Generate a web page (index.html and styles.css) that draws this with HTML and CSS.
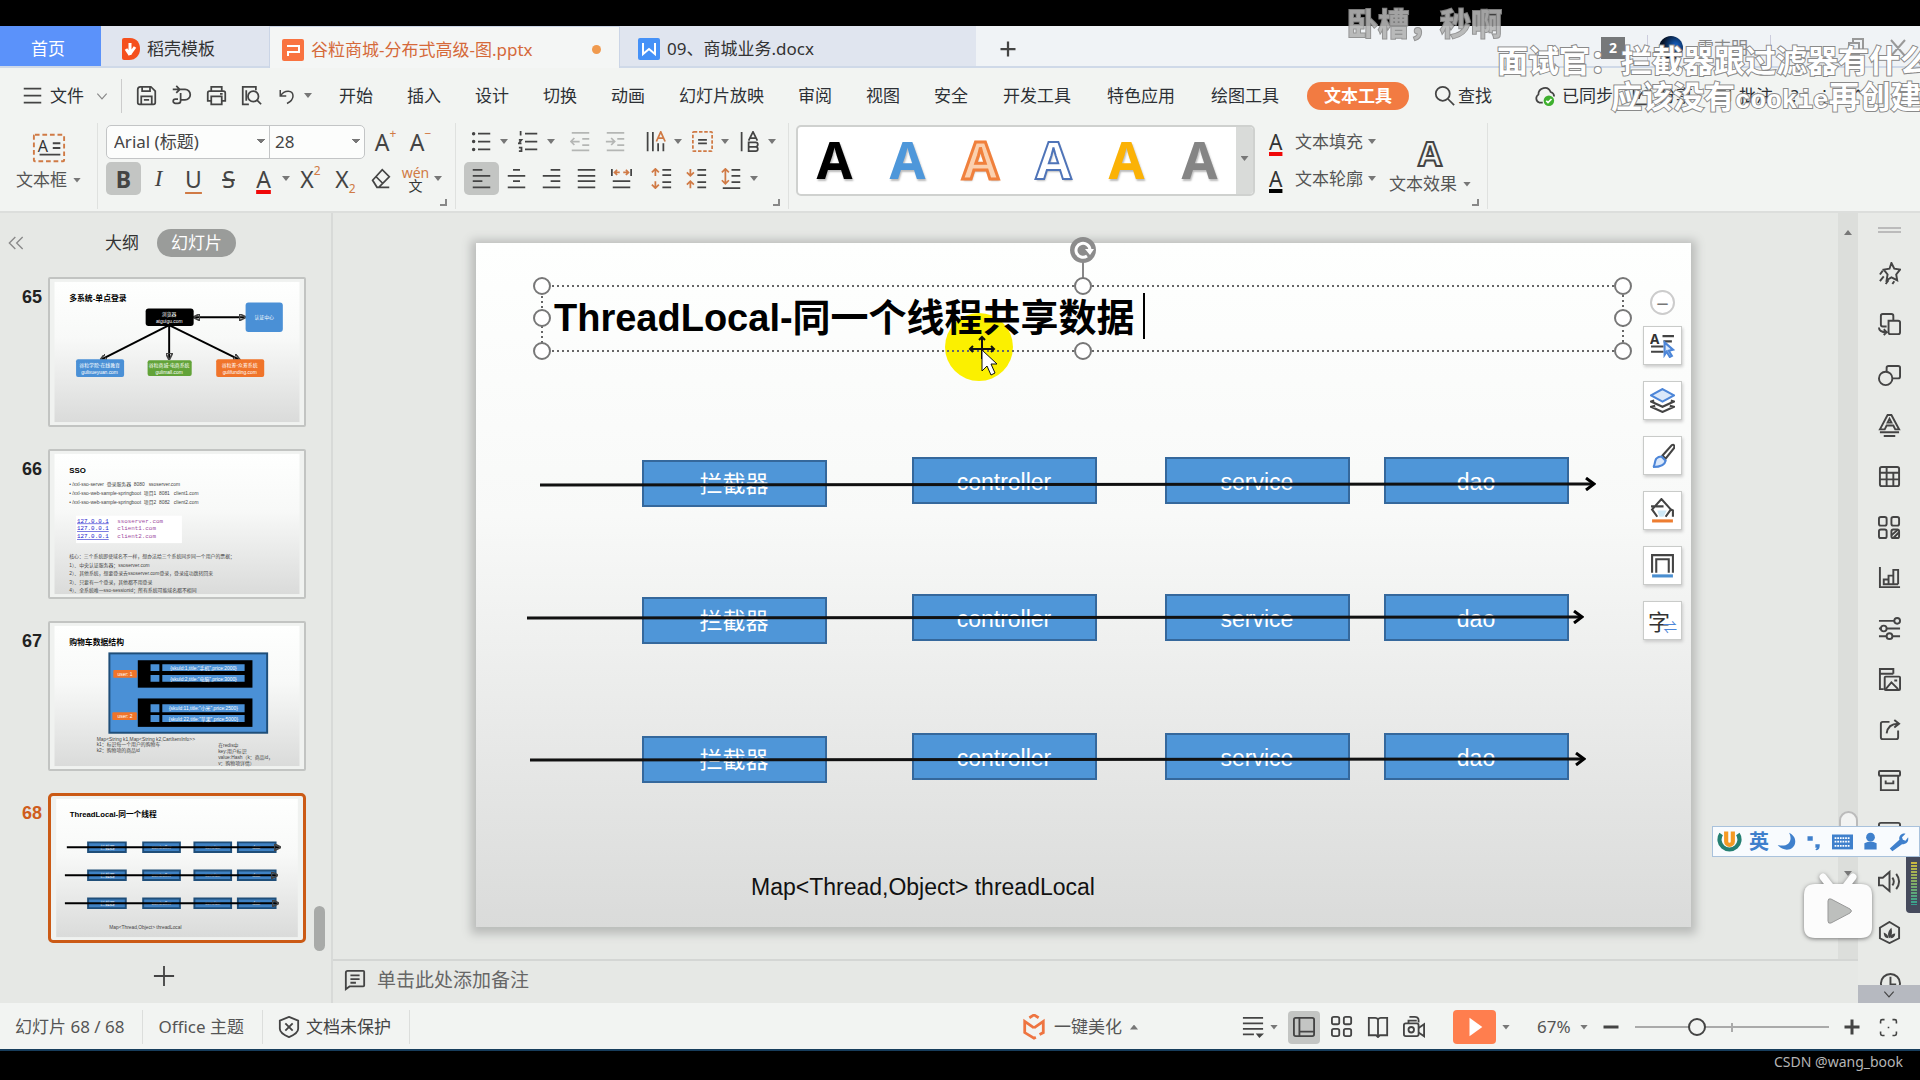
FILE: index.html
```html
<!DOCTYPE html>
<html lang="zh-CN">
<head>
<meta charset="utf-8">
<title>谷粒商城-分布式高级-图.pptx</title>
<link rel="stylesheet" href="styles.css">
</head>
<body>
<svg class="defs" aria-hidden="true">
  <symbol id="menu" viewBox="0 0 24 24"><path d="M2 4h20M2 12h20M2 20h20"/></symbol>
  <symbol id="chev" viewBox="0 0 24 24"><path d="M4 8l8 9 8-9"/></symbol>
  <symbol id="fold" viewBox="0 0 24 24"><path d="M11 3l-9 9 9 9M22 3l-9 9 9 9"/></symbol>
  <symbol id="save" viewBox="0 0 24 24"><path d="M5 2h12l5 5v13a2 2 0 0 1-2 2H4a2 2 0 0 1-2-2V5a3 3 0 0 1 3-3zM7 2v5h9V2M6 22v-9h12v9M9 17h6"/></symbol>
  <symbol id="export" viewBox="0 0 24 24"><path d="M2 5h7M6 1l4 4-4 4M10 5h6a6 6 0 0 1 0 12h-5M11 9v9a3 3 0 0 1-3 3H5a2 2 0 0 1 0-5h3"/></symbol>
  <symbol id="print" viewBox="0 0 24 24"><path d="M6 7V2h12v5M6 18H2V9a2 2 0 0 1 2-2h16a2 2 0 0 1 2 2v9h-4M6 13h12v9H6zM16 10h3"/></symbol>
  <symbol id="preview" viewBox="0 0 24 24"><path d="M9 22H2V2h15v4M18 17l5 5M6 6v12"/><circle cx="14" cy="13" r="6"/></symbol>
  <symbol id="undo" viewBox="0 0 24 24"><path d="M3 4v8h8M3 12C9 3 20 4 20 12c0 5-4 8-8 10"/></symbol>
  <symbol id="search" viewBox="0 0 24 24"><circle cx="10" cy="10" r="8"/><path d="M16 16l7 7"/></symbol>
  <symbol id="cloud" viewBox="0 0 24 24"><path d="M10 20H6a5 5 0 0 1-1-9C5 3 16 0 19 8c3 1 4 3 4 5"/><circle cx="17" cy="18" r="6" fill="#3fb02f" stroke="none"/><path d="M14 18l2 2 4-4" stroke="#fff"/></symbol>
  <symbol id="share" viewBox="0 0 24 24"><path d="M12 4H5a2 2 0 0 0-2 2v14a2 2 0 0 0 2 2h14a2 2 0 0 0 2-2v-7M9 16C10 9 14 6 21 6M17 2l5 4-5 4"/></symbol>
  <symbol id="comment" viewBox="0 0 24 24"><path d="M2 22V4a2 2 0 0 1 2-2h17a1 1 0 0 1 1 1v15a1 1 0 0 1-1 1H6zM7 7h10M7 11h10M7 15h6"/></symbol>
  <symbol id="textbox" viewBox="0 0 36 32"><rect x="2" y="2" width="32" height="28" rx="1" stroke="#d07a45" stroke-dasharray="5 3"/><path d="M22 11h8M22 16h8M8 23h22"/><text x="6" y="20" font-size="17">A</text></symbol>
  <symbol id="bul" viewBox="0 0 24 24"><path d="M8 3h14M8 12h14M8 21h14"/><circle cx="3" cy="3" r="1"/><circle cx="3" cy="12" r="1"/><circle cx="3" cy="21" r="1"/></symbol>
  <symbol id="num" viewBox="0 0 24 24"><path d="M8 3h14M8 12h14M8 21h14M2 1h1v4M1 10h3l-3 4h3M1 19h3v4H1"/></symbol>
  <symbol id="outd" viewBox="0 0 24 24"><path d="M2 2h20M14 9h8M14 16h8M2 22h20M2 12h9M5 8l-4 4 4 4"/></symbol>
  <symbol id="ind" viewBox="0 0 24 24"><path d="M2 2h20M14 9h8M14 16h8M2 22h20M1 12h9M7 8l4 4-4 4"/></symbol>
  <symbol id="dir" viewBox="0 0 24 24"><path d="M3 1v22M9 1v22M15 14v9M21 14v9"/><path d="M13 12l5-11 5 11M14 8h8" stroke="#d07a45"/></symbol>
  <symbol id="boxal" viewBox="0 0 24 24"><rect x="1" y="1" width="22" height="22" rx="1" stroke="#d07a45" stroke-dasharray="4 2"/><path d="M7 10h10M7 14h10"/></symbol>
  <symbol id="abdir" viewBox="0 0 24 24"><path d="M3 1v22M11 11l5-10 5 10M12 8h8M11 13h8a2 2 0 0 1 0 5h-8zM11 18h8a2 2 0 0 1 0 5h-8z"/></symbol>
  <symbol id="al" viewBox="0 0 24 24"><path d="M2 2h11M2 9h20M2 15h11M2 22h20"/></symbol>
  <symbol id="ac" viewBox="0 0 24 24"><path d="M8 2h8M2 9h20M8 15h8M2 22h20"/></symbol>
  <symbol id="ar" viewBox="0 0 24 24"><path d="M11 2h11M2 9h20M11 15h11M2 22h20"/></symbol>
  <symbol id="aj" viewBox="0 0 24 24"><path d="M2 2h20M2 9h20M2 15h20M2 22h20"/></symbol>
  <symbol id="ad" viewBox="0 0 24 24"><path d="M1 1v8M23 1v8M2 15h20M2 22h20"/><path d="M4 5h6M7 2L4 5l3 3M14 5h6M17 2l3 3-3 3" stroke="#d07a45"/></symbol>
  <symbol id="sp1" viewBox="0 0 24 24"><path d="M13 2h10M13 8h10M13 16h10M13 22h10"/><path d="M5 9V2M1 5l4-4 4 4M5 15v7M1 19l4 4 4-4" stroke="#d07a45"/></symbol>
  <symbol id="sp2" viewBox="0 0 24 24"><path d="M13 2h10M13 8h10M13 16h10M13 22h10"/><path d="M5 1v7M1 5l4 4 4-4M5 23v-8M1 19l4-4 4 4" stroke="#d07a45"/></symbol>
  <symbol id="sp3" viewBox="0 0 24 24"><path d="M12 2h10M12 9h10M12 16h10M2 23h20"/><path d="M5 1v17M1 5l4-4 4 4M1 14l4 4 4-4" stroke="#d07a45"/></symbol>
  <symbol id="eraser" viewBox="0 0 24 24"><path d="M3 14L14 2l8 8-12 12H8zM7 10l8 8M10 22h12"/></symbol>
  <symbol id="star" viewBox="0 0 24 24"><path d="M14 1l3 6 6 1-4 5 1 6-6-3-5 3 1-6-4-5 6-1zM5 9l-3 4M6 15l-4 5M11 19l-3 4M17 20l-2 3"/></symbol>
  <symbol id="swap" viewBox="0 0 24 24"><path d="M9 14H5a2 2 0 0 1-2-2V3a2 2 0 0 1 2-2h9a2 2 0 0 1 2 2v4M11 8h10a2 2 0 0 1 2 2v10a2 2 0 0 1-2 2H13a2 2 0 0 1-2-2zM1 15c0 4 3 5 8 5M6 17l3 3-3 3"/></symbol>
  <symbol id="shape" viewBox="0 0 24 24"><circle cx="8" cy="15" r="7"/><path d="M9 8V4a2 2 0 0 1 2-2h10a2 2 0 0 1 2 2v9a2 2 0 0 1-2 2h-6"/></symbol>
  <symbol id="wordart" viewBox="0 0 24 24"><path d="M2 16L10 1h4l8 15h-4l-2-4H9l-2 4zM10 9l2-4 2 4zM2 19h20M6 23h12"/></symbol>
  <symbol id="table" viewBox="0 0 24 24"><rect x="2" y="2" width="20" height="20" rx="2"/><path d="M2 8h20M2 15h20M9 2v20M16 8v14"/></symbol>
  <symbol id="grid" viewBox="0 0 24 24"><rect x="1" y="1" width="8" height="8" rx="2"/><rect x="14" y="1" width="8" height="8" rx="2"/><rect x="1" y="14" width="8" height="8" rx="2"/><rect x="14" y="14" width="8" height="8" rx="2"/></symbol>
  <symbol id="parts" viewBox="0 0 24 24"><rect x="1" y="1" width="8" height="9" rx="2"/><rect x="14" y="1" width="8" height="9" rx="2"/><rect x="1" y="14" width="8" height="9" rx="2"/><rect x="14" y="14" width="8" height="9" rx="2"/><path d="M14 20l7-6M16 23l6-6"/></symbol>
  <symbol id="chart" viewBox="0 0 24 24"><path d="M2 1v21h21M6 20v-6h5v6M11 19v-9h5v9M16 19V4h5v15M6 19h15"/></symbol>
  <symbol id="sliders" viewBox="0 0 24 24"><path d="M1 4h16M1 12h2M9 12h14M1 20h8M15 20h8"/><circle cx="20" cy="4" r="3"/><circle cx="6" cy="12" r="3"/><circle cx="12" cy="20" r="3"/></symbol>
  <symbol id="gallery" viewBox="0 0 24 24"><path d="M16 6V1H2v21h4M2 6h14"/><rect x="7" y="9" width="16" height="14" rx="1"/><path d="M8 22l6-7 7 7M17 13h3"/></symbol>
  <symbol id="archive" viewBox="0 0 24 24"><rect x="1" y="2" width="22" height="5" rx="1"/><path d="M3 7v15h18V7M8 12v3h8v-3"/></symbol>
  <symbol id="sound" viewBox="0 0 24 24"><path d="M1 8h4l7-6v20l-7-6H1zM15 8q3 4 0 8M19 4q6 8 0 16"/></symbol>
  <symbol id="leaf" viewBox="0 0 24 24"><path d="M12 1l10 6v11l-10 5-10-5V7z"/><path d="M12 18c-3-4-1-8 2-11 1 4 1 8-2 11zM11 18c-4 0-5-3-5-6 3 1 5 3 5 6zM13 18c0-3 2-5 5-5 0 3-2 5-5 5z" fill="#444" stroke="none"/></symbol>
  <symbol id="clock" viewBox="0 0 24 24"><circle cx="13" cy="12" r="10"/><path d="M13 5v8h6"/></symbol>
  <symbol id="screen" viewBox="0 0 24 24"><rect x="1" y="3" width="22" height="16" rx="2"/><path d="M5 22h14"/></symbol>
  <symbol id="shield" viewBox="0 0 24 24"><path d="M12 1l10 4v9c0 4-5 7-10 9C7 21 2 18 2 14V5zM8 8l8 8M16 8l-8 8"/></symbol>
  <symbol id="pen" viewBox="0 0 24 24"><path d="M12 12l9-10c2-1 3 1 2 3l-8 10z"/><path d="M11 13l4 4c-1 5-6 6-12 6 2-1 1-5 3-8q2-2 5-2z" stroke="#4d86d8" fill="#dbe8fa"/></symbol>
  <symbol id="layers" viewBox="0 0 24 24"><path d="M12 1l11 6-11 6L1 7z" stroke="#4d86d8" fill="#dbe8fa"/><path d="M4 12l-3 1 11 5 11-5-3-1M5 17l-4 1 11 5 11-5-4-1"/></symbol>
  <symbol id="fillpot" viewBox="0 0 24 24"><path d="M7 18l-5-7 9-10 9 10-5 7M1 8h12M20 11l2 1v6"/><path d="M7 12h9l-3 6H9z" fill="#cfe9f7" stroke="none"/><path d="M2 22h20" stroke="#ed7d31" stroke-width="3"/></symbol>
  <symbol id="outline" viewBox="0 0 24 24"><path d="M2 19V2h20v17M6 19V6h12v13"/><path d="M2 22h20" stroke="#4a8ed0" stroke-width="3"/></symbol>
  <symbol id="seltext" viewBox="0 0 24 24"><path d="M12 3h11M13 8h8M1 13h12M1 18h12"/><text x="0" y="11" font-size="13" font-weight="700">A</text><path d="M14 9l8 7-4 1 3 5-2 1-3-5-2 3z" stroke="#4d86d8" fill="#dbe8fa"/></symbol>
  <symbol id="view" viewBox="0 0 24 24"><rect x="1" y="2" width="22" height="20" rx="2"/><path d="M7 2v20M7 17h16"/></symbol>
  <symbol id="book" viewBox="0 0 24 24"><path d="M12 4v19M12 4q-1-2-3-2H2v19h8l2 2 2-2h8V2h-7q-2 0-3 2"/></symbol>
  <symbol id="cam" viewBox="0 0 24 24"><rect x="1" y="8" width="16" height="14" rx="2"/><path d="M17 13l6-4v13l-6-4M6 8V5h9M7 1h6q4 0 4 4v2"/><circle cx="9" cy="15" r="3"/></symbol>
  <symbol id="notes" viewBox="0 0 24 24"><path d="M1 2h22M1 8h22M1 14h22M1 20h12"/><path d="M15 19h9l-5 5z" fill="#444" stroke="none"/></symbol>
  <symbol id="fit" viewBox="0 0 24 24"><path d="M2 7V4a2 2 0 0 1 2-2h3M17 2h3a2 2 0 0 1 2 2v3M22 17v3a2 2 0 0 1-2 2h-3M7 22H4a2 2 0 0 1-2-2v-3M11 12h2" /></symbol>
  <marker id="tip" viewBox="0 0 12 14" refX="10" refY="7" markerWidth="12" markerHeight="14" markerUnits="userSpaceOnUse" orient="auto-start-reverse"><path d="M2 1l8 6-8 6" fill="none" stroke="#000" stroke-width="3"/></marker>
  <marker id="dot" viewBox="0 0 8 8" refX="6" refY="4" markerWidth="7" markerHeight="7" markerUnits="userSpaceOnUse" orient="auto-start-reverse"><path d="M0 0l8 4-8 4z"/></marker>
  <linearGradient id="paper" x1="0" y1="0" x2="0" y2="1"><stop offset="0" stop-color="#fefffe"/><stop offset=".4" stop-color="#f8f9f8"/><stop offset="1" stop-color="#dadbda"/></linearGradient>
</svg>

<div class="app">
  <header class="tabs">
    <button class="tab home">首页</button>
    <button class="tab docer"><svg viewBox="0 0 18 22" class="logo"><path d="M2 0h6c7 0 10 5 10 11s-4 11-11 11H2a2 2 0 0 1-2-2V2a2 2 0 0 1 2-2z" fill="#f5501e"/><path d="M8 17V5M8 17l-4-6M8 16l5-7" stroke="#fff" stroke-width="3" fill="none"/></svg>稻壳模板</button>
    <button class="tab active"><svg viewBox="0 0 22 22" class="logo wide"><rect width="22" height="22" rx="2" fill="#f97340"/><path d="M5 7h12v6H6v4" stroke="#fff" stroke-width="2" fill="none"/></svg>谷粒商城-分布式高级-图.pptx<i class="unsaved"></i></button>
    <button class="tab docx"><svg viewBox="0 0 22 22" class="logo wide"><rect width="22" height="22" rx="2" fill="#4591f7"/><path d="M5 5v11l6-5 6 5V5" stroke="#fff" stroke-width="2" fill="none"/></svg>09、商城业务.docx</button>
    <button class="newtab" aria-label="新建"><svg viewBox="0 0 24 24"><path d="M12 2v20M2 12h20"/></svg></button>
    <div class="account"><span class="count">2</span><i class="bar"></i><i class="avatar"></i><span class="user">雷吉明</span><i class="bar far"></i>
      <svg viewBox="0 0 110 20"><path d="M0 13h16M50 5h10v12H50zM54 5V1h10v12h-4M92 2l14 16M106 2L92 18"/></svg></div>
  </header>

  <nav class="menubar">
    <button class="file"><svg><use href="#menu"/></svg>文件<svg class="sm"><use href="#chev"/></svg></button>
    <div class="quick">
      <button aria-label="保存"><svg><use href="#save"/></svg></button><button aria-label="输出"><svg><use href="#export"/></svg></button><button aria-label="打印"><svg><use href="#print"/></svg></button><button aria-label="预览"><svg><use href="#preview"/></svg></button><button aria-label="撤销"><svg class="undo"><use href="#undo"/></svg></button><i class="tri"></i>
    </div>
    <div class="menus">
      <button>开始</button><button>插入</button><button>设计</button><button>切换</button><button>动画</button><button>幻灯片放映</button><button>审阅</button><button>视图</button><button>安全</button><button>开发工具</button><button>特色应用</button><button>绘图工具</button><button class="pill">文本工具</button>
    </div>
    <button class="find"><svg><use href="#search"/></svg>查找</button>
    <div class="sync"><button><svg><use href="#cloud"/></svg>已同步</button><button><svg><use href="#share"/></svg>分享</button><button><svg><use href="#comment"/></svg>批注</button><button>?</button><button>⋮</button><button>⌃</button></div>
  </nav>

  <section class="ribbon">
    <div class="group boxgroup"><button class="tall"><svg class="big"><use href="#textbox"/></svg><span>文本框<i class="tri"></i></span></button></div>
    <div class="group font">
      <div class="row">
        <div class="combo"><select aria-label="字体"><option>Arial (标题)</option></select><select aria-label="字号" class="size"><option>28</option></select></div>
        <button class="glyph" aria-label="增大字号">A<sup>+</sup></button><button class="glyph" aria-label="减小字号">A<sup>−</sup></button>
      </div>
      <div class="row">
        <button class="glyph on"><b>B</b></button><button class="glyph it">I</button><button class="glyph und">U</button><button class="glyph str">S</button><button class="glyph red">A</button><i class="tri"></i><button class="glyph">X<sup>2</sup></button><button class="glyph">X<sub>2</sub></button><button aria-label="清除格式"><svg><use href="#eraser"/></svg></button><button class="pinyin"><span>wén</span><span>文</span></button><i class="tri"></i>
      </div><i class="corner"></i>
    </div>
    <div class="group para">
      <div class="row">
        <button><svg><use href="#bul"/></svg></button><i class="tri"></i><button><svg><use href="#num"/></svg></button><i class="tri"></i><button class="off gap"><svg><use href="#outd"/></svg></button><button class="off"><svg><use href="#ind"/></svg></button><button class="gap"><svg><use href="#dir"/></svg></button><i class="tri"></i><button><svg><use href="#boxal"/></svg></button><i class="tri"></i><button><svg><use href="#abdir"/></svg></button><i class="tri"></i>
      </div>
      <div class="row">
        <button class="on"><svg><use href="#al"/></svg></button><button><svg><use href="#ac"/></svg></button><button><svg><use href="#ar"/></svg></button><button><svg><use href="#aj"/></svg></button><button><svg><use href="#ad"/></svg></button><button class="gap"><svg><use href="#sp1"/></svg></button><button><svg><use href="#sp2"/></svg></button><button><svg><use href="#sp3"/></svg></button><i class="tri"></i>
      </div><i class="corner"></i>
    </div>
    <div class="group last">
      <div class="presets"><button class="w1">A</button><button class="w2">A</button><button class="w3">A</button><button class="w4">A</button><button class="w5">A</button><button class="w6">A</button><button class="more" aria-label="更多"><i class="tri"></i></button></div>
      <div class="fills"><button><span class="ic red">A</span>文本填充<i class="tri"></i></button><button><span class="ic blk">A</span>文本轮廓<i class="tri"></i></button></div>
      <button class="tall effect"><span class="hollow">A</span><span>文本效果<i class="tri"></i></span></button><i class="corner"></i>
    </div>
  </section>

  <main class="work">
    <aside class="outline">
      <div class="panehead"><button class="fold" aria-label="折叠"><svg><use href="#fold"/></svg></button><button>大纲</button><button class="cur">幻灯片</button></div>
      <ol class="thumbs">
        <li><span>65</span><svg viewBox="0 0 258 149" class="thumb"><rect class="pg" x="4" y="3" width="250" height="143"/><text x="19" y="22" class="t">多系统-单点登录</text>
          <g stroke="#000" stroke-width="2" fill="none"><path d="M121 47L52 82" marker-end="url(#dot)"/><path d="M121 47v34" marker-end="url(#dot)"/><path d="M121 47l71 35" marker-end="url(#dot)"/><path d="M147 39h51" marker-end="url(#dot)" marker-start="url(#dot)"/></g>
          <rect x="97" y="30" width="49" height="18" rx="3"/><rect x="199" y="24" width="38" height="30" rx="3" fill="#4a90d6"/><rect x="26" y="82" width="49" height="18" rx="2" fill="#4a90d6"/><rect x="99" y="83" width="45" height="16" rx="2" fill="#62a338"/><rect x="169" y="82" width="49" height="18" rx="2" fill="#f0742a"/>
          <g class="m"><text x="121" y="38">浏览器</text><text x="121" y="45">atguigu.com</text><text x="218" y="41">认证中心</text><text x="50" y="90">谷粒学院-在线教育</text><text x="50" y="97">gulixueyuan.com</text><text x="121" y="90">谷粒商城-电商系统</text><text x="121" y="97">gulimall.com</text><text x="193" y="90">谷粒筹-众筹系统</text><text x="193" y="97">gulifunding.com</text></g></svg></li>
        <li><span>66</span><svg viewBox="0 0 258 149" class="thumb"><rect class="pg" x="4" y="3" width="250" height="143"/><text x="19" y="22" class="t">SSO</text>
          <g class="s"><text x="19" y="36">• /xxl-sso-server  登录服务器  8080   ssoserver.com</text><text x="19" y="45">• /xxl-sso-web-sample-springboot  项目1  8081   client1.com</text><text x="19" y="54">• /xxl-sso-web-sample-springboot  项目2  8082   client2.com</text></g>
          <rect x="26" y="66" width="108" height="28" fill="#fff"/><g class="c"><text x="27" y="73">127.0.0.1</text><text x="27" y="81">127.0.0.1</text><text x="27" y="89">127.0.0.1</text></g><g class="c p"><text x="68" y="73">ssoserver.com</text><text x="68" y="81">client1.com</text><text x="68" y="89">client2.com</text></g>
          <g class="s"><text x="19" y="109">核心：三个系统即使域名不一样，想办法给三个系统同步同一个用户的票据；</text><text x="19" y="118">1）、中央认证服务器；ssoserver.com</text><text x="19" y="127">2）、其他系统，想要登录去ssoserver.com登录，登录成功跳转回来</text><text x="19" y="136">3）、只要有一个登录，其他都不用登录</text><text x="19" y="144">4）、全系统唯一sso-sessionid；所有系统可能域名都不相同</text></g></svg></li>
        <li><span>67</span><svg viewBox="0 0 258 149" class="thumb"><rect class="pg" x="4" y="3" width="250" height="143"/><text x="19" y="22" class="t">购物车数据结构</text>
          <rect x="60" y="31" width="161" height="81" fill="#4a90d6" stroke="#1f4e79"/><rect x="89" y="38" width="117" height="28"/><rect x="89" y="77" width="117" height="29"/><g fill="#4a90d6"><path d="M102 42h9v7h-9zM114 42h84v7h-84zM102 53h9v7h-9zM114 53h84v7h-84zM102 83h9v8h-9zM114 83h84v8h-84zM102 94h9v7h-9zM114 94h84v7h-84z"/></g><rect x="64" y="48" width="24" height="8" rx="1" fill="#f0742a"/><rect x="63" y="91" width="25" height="8" rx="1" fill="#f0742a"/>
          <g class="m"><text x="76" y="54">user: 1</text><text x="76" y="97">user: 2</text><text x="156" y="48">{skuId:1,title:"手机",price:2000}</text><text x="156" y="59">{skuId:2,title:"电脑",price:3000}</text><text x="156" y="89">{skuId:11,title:"小米",price:2500}</text><text x="156" y="100">{skuId:22,title:"苹果",price:5000}</text></g>
          <g class="s"><text x="47" y="120">Map&lt;String k1,Map&lt;String k2,CartItemInfo&gt;&gt;</text><text x="47" y="126">k1：标识每一个用户的购物车</text><text x="47" y="132">k2：购物项的商品id</text><text x="171" y="127">在redis中</text><text x="171" y="133">key:用户标识</text><text x="171" y="139">value:Hash（k：商品id，</text><text x="171" y="145">v：购物项详情）</text></g></svg></li>
        <li class="sel"><span>68</span><svg viewBox="0 0 258 149" class="thumb"><rect class="pg" x="4" y="3" width="250" height="143"/><text x="18" y="22" class="t">ThreadLocal-同一个线程</text>
          <g fill="#3f82c4" stroke="#1f4e79"><path d="M37 48h39v10H37zM94 48h38v10H94zM147 48h38v10h-38zM192 48h39v10h-39zM37 77h39v10H37zM94 77h38v10H94zM147 77h38v10h-38zM192 77h39v10h-39zM37 106h39v10H37zM94 106h38v10H94zM147 106h38v10h-38zM192 106h39v10h-39z"/></g>
          <g class="m"><text x="57" y="55">拦截器</text><text x="113" y="55">controller</text><text x="166" y="55">service</text><text x="211" y="55">dao</text><text x="57" y="84">拦截器</text><text x="113" y="84">controller</text><text x="166" y="84">service</text><text x="211" y="84">dao</text><text x="57" y="113">拦截器</text><text x="113" y="113">controller</text><text x="166" y="113">service</text><text x="211" y="113">dao</text></g>
          <g stroke="#000" stroke-width="2"><path d="M15 53h220" marker-end="url(#dot)"/><path d="M13 82h219" marker-end="url(#dot)"/><path d="M13 111h220" marker-end="url(#dot)"/></g><text x="59" y="138" class="s wide">Map&lt;Thread,Object&gt; threadLocal</text></svg></li>
      </ol>
      <i class="panebar"></i>
      <button class="addslide" aria-label="新建幻灯片"><svg viewBox="0 0 24 24"><path d="M12 1v22M1 12h22"/></svg></button>
    </aside>

    <section class="editor">
      <div class="stage">
        <svg class="slide" viewBox="0 0 1215 684">
          <rect width="1215" height="684" fill="url(#paper)"/>
          <circle cx="503" cy="104" r="34" fill="#fbf000"/>
          <g fill="none" stroke="#666" stroke-width="2" stroke-dasharray="2 3"><rect x="66" y="43" width="1081" height="65"/></g>
          <text x="78" y="88" class="title">ThreadLocal-同一个线程共享数据</text>
          <path d="M668 50v46" stroke="#000" stroke-width="2"/>
          <path d="M607 19v18" stroke="#888" stroke-width="2"/>
          <circle cx="607" cy="7" r="13" fill="#8c8c8c"/><path d="M611 13a7 7 0 1 1 3-6" fill="none" stroke="#fff" stroke-width="3"/><path d="M609 6h9l-4 6z" fill="#fff"/>
          <g fill="#fff" stroke="#777" stroke-width="2"><circle cx="66" cy="43" r="8"/><circle cx="66" cy="75" r="8"/><circle cx="66" cy="108" r="8"/><circle cx="607" cy="43" r="8"/><circle cx="607" cy="108" r="8"/><circle cx="1147" cy="43" r="8"/><circle cx="1147" cy="75" r="8"/><circle cx="1147" cy="108" r="8"/></g>
          <g fill="#4f96d8" stroke="#35689c" stroke-width="2">
            <rect x="167" y="218" width="183" height="45"/><rect x="437" y="215" width="183" height="45"/><rect x="690" y="215" width="183" height="45"/><rect x="909" y="215" width="183" height="45"/>
            <rect x="167" y="355" width="183" height="45"/><rect x="437" y="352" width="183" height="45"/><rect x="690" y="352" width="183" height="45"/><rect x="909" y="352" width="183" height="45"/>
            <rect x="167" y="494" width="183" height="45"/><rect x="437" y="491" width="183" height="45"/><rect x="690" y="491" width="183" height="45"/><rect x="909" y="491" width="183" height="45"/>
          </g>
          <g class="node">
            <text x="258" y="249">拦截器</text><text x="528" y="247">controller</text><text x="781" y="247">service</text><text x="1000" y="247">dao</text>
            <text x="258" y="386">拦截器</text><text x="528" y="384">controller</text><text x="781" y="384">service</text><text x="1000" y="384">dao</text>
            <text x="258" y="525">拦截器</text><text x="528" y="523">controller</text><text x="781" y="523">service</text><text x="1000" y="523">dao</text>
          </g>
          <g stroke="#111" stroke-width="3"><path d="M64 242L1118 241" marker-end="url(#tip)"/><path d="M51 375L1106 374" marker-end="url(#tip)"/><path d="M54 517L1108 516" marker-end="url(#tip)"/></g>
          <text x="275" y="652" class="map">Map&lt;Thread,Object&gt; threadLocal</text>
          <g stroke="#111" stroke-width="2" fill="none"><path d="M494 106h24M506 94v22M497 103l-3 3 3 3M515 103l3 3-3 3M503 97l3-3 3 3"/><path d="M506 107v21l5-5 4 9 4-2-4-9h6z" fill="#fff" stroke-width="1"/></g>
        </svg>
        <div class="float">
          <button class="round" aria-label="收起">−</button>
          <button aria-label="选择文本"><svg><use href="#seltext"/></svg></button><button aria-label="图层"><svg><use href="#layers"/></svg></button><button aria-label="格式刷"><svg><use href="#pen"/></svg></button><button aria-label="填充"><svg><use href="#fillpot"/></svg></button><button aria-label="轮廓"><svg><use href="#outline"/></svg></button><button class="zi">字<small>⇌</small></button>
        </div>
      </div>
      <div class="vbar"><i class="tri up"></i><i class="knob"></i><i class="tri down"></i></div>
      <label class="notes"><svg><use href="#comment"/></svg><input type="text" placeholder="单击此处添加备注"></label>
    </section>

    <aside class="side">
      <i class="grip"></i>
      <button><svg><use href="#star"/></svg></button><button><svg><use href="#swap"/></svg></button><button><svg><use href="#shape"/></svg></button><button><svg><use href="#wordart"/></svg></button><button><svg><use href="#table"/></svg></button><button><svg><use href="#parts"/></svg></button><button><svg><use href="#chart"/></svg></button><button><svg><use href="#sliders"/></svg></button><button><svg><use href="#gallery"/></svg></button><button><svg><use href="#share"/></svg></button><button><svg><use href="#archive"/></svg></button><button><svg><use href="#screen"/></svg></button><button><svg><use href="#sound"/></svg></button><button><svg><use href="#leaf"/></svg></button><button><svg><use href="#clock"/></svg></button>
      <button class="down" aria-label="更多"><svg><use href="#chev"/></svg></button>
    </aside>
  </main>

  <footer class="status">
    <span class="cell">幻灯片 68 / 68</span><span class="cell">Office 主题</span><button class="cell guard"><svg><use href="#shield"/></svg>文档未保护</button>
    <button class="beauty"><svg viewBox="0 0 24 28"><path d="M7 4l5-3 5 3M12 15L2 8v12l10 6 2-1M12 15l10-7v12l-4 2"/></svg>一键美化<i class="tri up"></i></button>
    <div class="views"><button><svg><use href="#notes"/></svg></button><i class="tri"></i><button class="on"><svg><use href="#view"/></svg></button><button><svg><use href="#grid"/></svg></button><button><svg><use href="#book"/></svg></button><button><svg><use href="#cam"/></svg></button></div>
    <button class="play" aria-label="放映"><svg viewBox="0 0 24 24"><path d="M6 2l14 10L6 22z"/></svg></button><i class="tri"></i>
    <span class="pct">67%</span><i class="tri"></i>
    <button class="zoom" aria-label="缩小"><svg viewBox="0 0 24 24"><path d="M2 12h20"/></svg></button><input type="range" aria-label="缩放" min="0" max="100" value="30"><button class="zoom" aria-label="放大"><svg viewBox="0 0 24 24"><path d="M2 12h20M12 2v20"/></svg></button><button class="fit" aria-label="适应"><svg><use href="#fit"/></svg></button>
  </footer>
</div>
<div class="credit">CSDN @wang_book</div>

<div class="meter"><i></i></div>
<div class="ime"><svg viewBox="0 0 30 30" class="u"><path d="M5 6a12 12 0 1 0 20 0" fill="none" stroke="#247f72" stroke-width="5"/><path d="M11 3v12a4 4 0 0 0 8 0V3" fill="none" stroke="#f59a23" stroke-width="5"/></svg><b>英</b>
  <svg viewBox="0 0 24 24"><path d="M15 2c5 10-2 17-13 14 7 9 20 6 20-4 0-5-3-8-7-10z"/></svg><svg viewBox="0 0 24 24"><path d="M4 6h6v5H4zM13 15h5c0 5-1 6-4 7l-1-1 2-2h-2z"/></svg><svg viewBox="0 0 24 24"><path d="M0 4h24v17H0z"/><path d="M3 8h18M3 12h18M3 17h18" stroke="#fff" stroke-width="2" stroke-dasharray="2 1"/></svg><svg viewBox="0 0 24 24"><circle cx="12" cy="7" r="5"/><path d="M5 14q7-4 14 0v7H5z"/></svg><svg viewBox="0 0 24 24"><path d="M2 20L13 10c-1-5 3-8 7-7l-4 4 1 3 3 1 3-4c1 5-2 8-7 8L5 23z"/></svg></div>
<svg class="tv" viewBox="0 0 70 68"><path d="M20 4l7 9M50 4l-7 9" stroke="#fcfcfc" stroke-width="7" stroke-linecap="round"/><path fill="#fcfcfc" d="M12 11h46q11 0 11 11v32q0 11-11 11H12Q1 65 1 54V22q0-11 11-11z"/><path d="M25 28v20q0 3 3 2l19-10q3-2 0-4L28 26q-3-1-3 2z" fill="#bdbfbd" stroke="#999" stroke-width="1"/></svg>
<div class="barrage"><p class="d1">卧槽，秒啊</p><p class="d2">面试官：拦截器跟过滤器有什么</p><p class="d3">应该没有<span>cookie</span>再创建</p></div>
</body>
</html>
```
FILE: styles.css
```css
* { box-sizing: border-box; }
body {
  margin: 0; height: 100vh; overflow: hidden; position: relative;
  display: flex; flex-direction: column; padding-top: 26px; background: #000;
  font: 17px/24px "Noto Sans", "Noto Sans CJK SC", sans-serif; color: #333;
}
button, select, input { font: inherit; color: inherit; border: 0; background: none; padding: 0; margin: 0; }
button { display: flex; align-items: center; justify-content: center; white-space: nowrap; }
svg { width: 22px; height: 22px; flex: none; fill: none; stroke: #444; stroke-width: 2; }
svg text { stroke: none; fill: #333; }
.defs { position: absolute; width: 0; height: 0; }
.tri { flex: none; width: 8px; height: 5px; background: #777; clip-path: polygon(0 0, 100% 0, 50% 100%); }
.tri.up { clip-path: polygon(50% 0, 100% 100%, 0 100%); }
.app { flex: 1; min-height: 0; display: flex; flex-direction: column; background: #f2f4f2; }

/* document tabs */
.tabs { display: flex; height: 42px; flex: none; background: #f0f3f6; border-bottom: 2px solid #cfd9e8; }
.tab { justify-content: flex-start; gap: 7px; background: #e0e5ef; height: 40px; padding-top: 6px; color: #333; }
.tab .logo { width: 18px; height: 22px; stroke: none; }
.tab .logo.wide { width: 22px; }
.home { width: 101px; padding-left: 31px; background: #5b92fa; color: #fff; }
.docer { width: 168px; padding-left: 21px; }
.active { width: 351px; height: 42px; padding: 4px 18px 0 12px; background: #f4f6f5; color: #d5693a; border: 1px solid #cbd5e6; border-bottom: 0; }
.unsaved { width: 9px; height: 9px; border-radius: 50%; background: #f09a4e; margin-left: auto; }
.docx { width: 356px; padding-left: 18px; }
.newtab { width: 64px; padding-top: 5px; }
.newtab svg { width: 18px; height: 18px; stroke-width: 3; }
.account { margin-left: auto; display: flex; align-items: center; color: #888; padding: 3px 11px 0 0; }
.account svg { width: 110px; height: 20px; stroke: #999; margin-left: 22px; }
.count { width: 24px; height: 22px; background: #76787a; color: #fff; font-size: 14px; line-height: 22px; text-align: center; font-weight: 700; margin-left: -7px; }
.bar { width: 1px; height: 26px; background: #ccd; margin: 0 11px 0 22px; }
.bar.far { margin-left: 22px; margin-right: 6px; }
.avatar { width: 24px; height: 24px; border-radius: 50%; background: radial-gradient(circle at 70% 40%, #1664c8, #061226 60%); margin-right: 14px; }

/* menu bar */
.menubar { display: flex; align-items: center; height: 55px; flex: none; padding-left: 22px; color: #2d3035; white-space: nowrap; }
.menubar svg { width: 21px; height: 21px; }
.file { gap: 7px; height: 34px; width: 100px; justify-content: flex-start; border-right: 1px solid #ccc; }
.file .sm { width: 14px; height: 14px; stroke: #888; margin-left: 4px; }
.quick { display: flex; align-items: center; padding-left: 7px; }
.quick button { width: 35px; }
.quick .undo { width: 18px; height: 18px; }
.menus { display: flex; align-items: center; gap: 34px; padding-left: 27px; }
.menus .pill { background: #f27b42; color: #fff; font-weight: 700; height: 28px; border-radius: 14px; padding: 0 17px; margin-left: -7px; }
.menus button:nth-child(n+10):nth-child(-n+12) { padding: 0 1px; }
.find { margin-left: 25px; gap: 3px; }
.sync { display: flex; gap: 18px; margin-left: 42px; }
.sync button { gap: 7px; }

/* ribbon */
.ribbon { display: flex; height: 90px; flex: none; border-bottom: 2px solid #dcdedc; }
.group { position: relative; display: flex; flex-direction: column; gap: 2px; height: 86px; padding: 1px 8px 0; border-right: 1px solid #dfe1df; }
.boxgroup { width: 98px; }
.font { width: 358px; }
.para { width: 333px; }
.last { flex-direction: row; gap: 0; width: 699px; padding-left: 7px; }
.row { display: flex; align-items: center; height: 35px; }
.row button { width: 35px; height: 33px; border-radius: 5px; flex: none; }
.row .gap { margin-left: 5px; }
.row .tri { margin: 0 3px 0 1px; }
.row svg { width: 21px; height: 21px; }
.row .on { background: #c3c5c3; }
.row .off { opacity: .35; }
.tall { flex-direction: column; gap: 4px; padding-top: 6px; }
.boxgroup .tall { padding-top: 8px; }
.tall span { display: flex; align-items: center; gap: 6px; color: #555; }
.big { width: 34px; height: 32px; }
.combo { display: flex; width: 259px; height: 34px; border: 1px solid #c3c5c6; border-radius: 5px; background: #fcfdfc; margin-right: 3px; flex: none; }
.combo select { width: 163px; height: 32px; padding-left: 7px; appearance: none; color: #444; border-right: 1px solid #c3c5c6;
  background: linear-gradient(51deg, transparent 50%, #777 50%) no-repeat right 8px center / 4px 5px, linear-gradient(129deg, #777 50%, transparent 50%) no-repeat right 4px center / 4px 5px; transform: none;
  background-image: conic-gradient(from 321deg at 50% 100%, #777 78deg, transparent 78deg); background-size: 8px 5px; background-position: right 4px center; }
.combo .size { flex: 1; width: auto; padding-left: 5px; border: 0; }
.glyph { font-size: 23px; color: #444; }
.glyph sup, .glyph sub { font-size: 12px; line-height: 12px; color: #d07a45; }
.glyph sup { align-self: flex-start; padding-top: 3px; }
.glyph sub { align-self: flex-end; }
.it { font-family: "Liberation Serif", serif; font-style: italic; }
.und { text-decoration: underline #d07a45 2px; text-underline-offset: 4px; }
.str { text-decoration: line-through; }
.red { text-decoration: underline #f00808 4px; text-underline-offset: 2px; text-decoration-skip-ink: none; }
.blk { text-decoration: underline #000 4px; text-underline-offset: 2px; text-decoration-skip-ink: none; }
.pinyin { flex-direction: column; font-size: 14px; line-height: 13px; }
.pinyin span:first-child { color: #d07a45; }
.corner { position: absolute; right: 8px; bottom: 3px; width: 7px; height: 7px; border: solid #888; border-width: 0 2px 2px 0; }
.presets { display: flex; width: 459px; height: 71px; margin-top: 1px; border: 2px solid #cfd1cf; border-radius: 5px; background: #fff; overflow: hidden; }
.presets button { width: 73px; font-size: 52px; line-height: 60px; font-weight: 700; text-shadow: 1px 2px 2px #bbb; padding-bottom: 4px; }
.presets .w1 { color: #000; } .presets .w2 { color: #4e97da; }
.presets .w3 { color: #fbd0ae; -webkit-text-stroke: 3px #f0803c; }
.presets .w4 { color: #fff; -webkit-text-stroke: 2px #4f74b8; }
.presets .w5 { color: #fbb206; } .presets .w6 { color: #858585; }
.presets .more { flex: 1; width: auto; background: #d9dbd9; }
.fills { display: flex; flex-direction: column; gap: 2px; margin-left: 14px; width: 112px; }
.fills button { height: 35px; justify-content: flex-start; color: #555; }
.fills .ic { width: 26px; text-align: left; color: #333; font-size: 21px; line-height: 22px; }
.fills .tri { margin-left: 5px; }
.effect { width: 98px; height: 80px; }
.tall .hollow { font-size: 34px; line-height: 30px; font-weight: 700; color: #f2f4f2; -webkit-text-stroke: 2px #444; }

/* workspace */
.work { flex: 1; min-height: 0; display: flex; background: #e6e8e5; }
.outline { width: 333px; flex: none; position: relative; border-right: 2px solid #d8dad8; display: flex; flex-direction: column; }
.panehead { display: flex; align-items: center; height: 28px; margin-top: 16px; padding-left: 8px; gap: 18px; }
.fold { margin-right: 63px; }
.fold svg { width: 16px; height: 16px; stroke: #888; }
.panehead .cur { background: #9a9c9a; color: #fff; border-radius: 14px; height: 28px; width: 79px; }
.thumbs { list-style: none; margin: 20px 0 0; padding: 0; display: flex; flex-direction: column; gap: 22px; }
.thumbs li { display: flex; gap: 5px; padding-left: 22px; color: #222; height: 150px; }
.thumbs span { width: 21px; padding-top: 8px; font: 700 18px/24px "Liberation Sans", sans-serif; }
.thumb { width: 258px; height: 150px; border: 2px solid #c2c4c2; border-radius: 2px; background: #f0f2f0; stroke: none; fill: #000; }
.pg { fill: url(#paper); }
.thumbs .sel span { color: #cf5d1c; }
.sel .thumb { border: 3px solid #cb5a15; border-radius: 5px; }
.thumb text { font-family: "Liberation Sans", "Noto Sans CJK SC", sans-serif; }
.thumb .t { font-size: 8px; font-weight: 700; fill: #000; }
.thumb .m text { font-size: 5px; text-anchor: middle; fill: #fff; }
.thumb .s, .thumb .s text { font-size: 5px; fill: #444; white-space: pre; }
.thumb .c text { font-family: "Liberation Mono", monospace; font-size: 6px; fill: #22c; text-decoration: underline; }
.thumb .p text { fill: #a04aa0; text-decoration: none; }
.panebar { position: absolute; right: 6px; bottom: 52px; width: 11px; height: 45px; border-radius: 6px; background: #a8aaa8; }
.addslide { margin: 22px 0 0 153px; width: 22px; height: 22px; }
.editor { flex: 1; min-width: 0; display: grid; grid-template: minmax(0, 1fr) 44px / minmax(0, 1fr) 20px; }
.stage { position: relative; padding: 30px 147px 0 143px; }
.slide { display: block; width: 100%; height: auto; overflow: visible; box-shadow: 0 2px 9px 5px #babcba; stroke: none; }
.title { font: 700 38px "Liberation Sans", "Noto Sans CJK SC", sans-serif; fill: #000; }
.node text { font: 23px "Liberation Sans", "Noto Sans CJK SC", sans-serif; fill: #fff; text-anchor: middle; }
.map { font: 23px "Liberation Sans", sans-serif; fill: #111; }
.float { position: absolute; top: 77px; right: 156px; width: 39px; display: flex; flex-direction: column; align-items: center; gap: 16px; }
.float button { width: 39px; height: 39px; background: #fff; border: 1px solid #c9cbc9; box-shadow: 1px 2px 3px #ccc; }
.float svg { width: 25px; height: 25px; }
.float .round { width: 25px; height: 25px; border-radius: 50%; border: 2px solid #ccc; box-shadow: none; font-size: 22px; margin-bottom: -5px; color: #777; }
.float .zi { font-size: 22px; }
.zi small { font-size: 14px; color: #4d86d8; margin-left: -7px; align-self: flex-end; }
.vbar { background: #dcdedb; display: flex; flex-direction: column; align-items: center; padding: 17px 0 83px; }
.knob { width: 19px; height: 32px; border: 2px solid #bbb; border-radius: 10px; background: #f2f3f2; margin: auto 0 28px; }
.notes { grid-column: 1 / 3; display: flex; align-items: center; gap: 11px; padding: 0 11px 4px; border-top: 2px solid #d4d6d4; font-size: 19px; }
.notes input { flex: 1; outline: 0; }
.notes input::placeholder { color: #666; opacity: 1; }
.side { width: 62px; flex: none; position: relative; overflow: hidden; background: #e8eae7; display: flex; flex-direction: column; align-items: center; }
.side button { height: 51px; flex: none; }
.side button:nth-of-type(3n) { height: 50px; }
.side svg { width: 23px; height: 23px; }
.grip { width: 23px; height: 6px; border: solid #bbb; border-width: 2px 0; margin: 14px 0 15px; flex: none; }
.side .down:last-child { position: absolute; left: 0; right: 0; bottom: 0; width: 100%; height: 18px; background: #b6b9c0; }
.side .down svg { width: 14px; height: 14px; }

/* status bar */
.status { display: flex; align-items: center; height: 48px; flex: none; padding-top: 2px; border-bottom: 2px solid #173d5c; color: #555; }
.cell { height: 34px; line-height: 34px; padding: 0 18px 0 15px; border-right: 1px solid #dcdedc; white-space: nowrap; }
.guard { gap: 6px; color: #444; }
.beauty { margin-left: auto; gap: 8px; }
.beauty svg { width: 24px; height: 26px; stroke: #ee7440; stroke-width: 3; }
.views { display: flex; align-items: center; margin-left: 97px; gap: 1px; }
.views button { width: 35px; height: 33px; border-radius: 4px; }
.views .tri { margin: 0 9px 0 -1px; }
.views .on { width: 32px; background: #c3c5c3; margin-right: 3px; }
.play { width: 43px; height: 34px; border-radius: 4px; background: #ff7e4e; margin: 0 6px 0 22px; }
.play svg { fill: #fff; stroke: none; }
.pct { margin: 0 6px 0 27px; width: 37px; }
.zoom { width: 34px; margin-left: 6px; }
.zoom svg { width: 18px; height: 18px; stroke-width: 4; }
.status input { appearance: none; width: 194px; height: 18px; margin: 0 0 0 7px; background: linear-gradient(#aaa, #aaa) no-repeat center / 100% 2px, linear-gradient(#aaa, #aaa) no-repeat 50% center / 2px 9px; }
.status input::-webkit-slider-thumb { appearance: none; width: 18px; height: 18px; border-radius: 50%; border: 2px solid #444; background: #f2f4f2; }
.fit { margin: 0 22px 0 10px; }
.fit svg { width: 19px; height: 19px; }
.credit { flex: none; height: 29px; padding-right: 17px; text-align: right; color: #b5b5b5; font-size: 14px; line-height: 22px; }

/* overlays above the window */
.ime { position: absolute; right: 0; top: 826px; width: 208px; height: 31px; background: #f8fbfe; border: 1px solid #a9c2dc; display: flex; align-items: center; gap: 7px; padding-left: 4px; }
.ime svg { width: 21px; height: 21px; fill: #3f80cc; stroke: none; }
.ime .u { width: 25px; height: 25px; }
.ime b { color: #3f80cc; font-size: 20px; }
.meter { position: absolute; right: 0; top: 850px; width: 14px; height: 63px; background: #454a5c; border-radius: 0 0 0 4px; padding: 12px 3px 8px 5px; }
.meter i { display: block; height: 100%; background: repeating-linear-gradient(#0000 0 2px, #454a5c 2px 3px), linear-gradient(#cbb83f, #34a090); }
.tv { position: absolute; right: 47px; top: 873px; width: 70px; height: 68px; filter: drop-shadow(0 1px 2px #777); stroke: none; }
.barrage { position: absolute; inset: 0; overflow: hidden; pointer-events: none; font-size: 31px; line-height: 38px; font-weight: 700; color: #fff; -webkit-text-stroke: 2px #8a8a8a; paint-order: stroke fill; white-space: nowrap; }
.barrage p { position: absolute; margin: 0; }
.barrage span { font-family: "Liberation Mono", monospace; font-size: 26px; }
.d1 { top: 4px; left: 1347px; color: #b4b4b4; opacity: .9; }
.d2 { top: 41px; left: 1497px; }
.d3 { top: 77px; left: 1611px; }
```
